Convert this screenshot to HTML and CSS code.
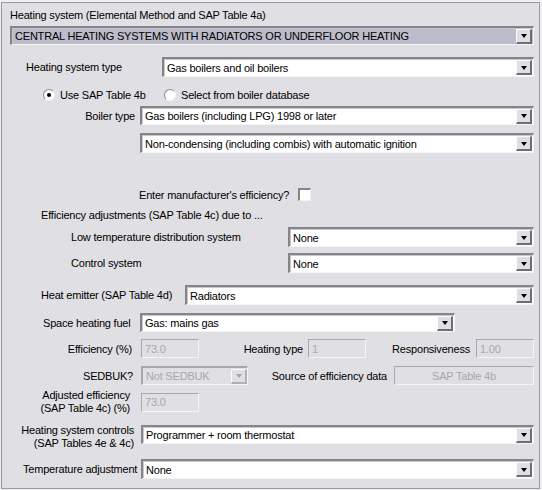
FILE: index.html
```html
<!DOCTYPE html>
<html>
<head>
<meta charset="utf-8">
<link rel="stylesheet" href="styles.css">
</head>
<body>
<div class="frame">
  <div class="row r-title"><span class="lbl">Heating system (Elemental Method and SAP Table 4a)</span></div>

  <div class="row r-main">
    <div class="combo combo-sel w-main"><span class="val">CENTRAL HEATING SYSTEMS WITH RADIATORS OR UNDERFLOOR HEATING</span><span class="btn"><i class="tri"></i></span></div>
  </div>

  <div class="row r-type">
    <span class="lbl w-type">Heating system type</span>
    <div class="combo grow"><span class="val">Gas boilers and oil boilers</span><span class="btn"><i class="tri"></i></span></div>
  </div>

  <div class="row r-radio">
    <span class="radio on"></span><span class="lbl rl1">Use SAP Table 4b</span>
    <span class="radio"></span><span class="lbl">Select from boiler database</span>
  </div>

  <div class="row r-boiler">
    <span class="lbl rlab w-boiler">Boiler type</span>
    <div class="combo grow"><span class="val">Gas boilers (including LPG) 1998 or later</span><span class="btn"><i class="tri"></i></span></div>
  </div>

  <div class="row r-boiler2">
    <div class="combo grow"><span class="val">Non-condensing (including combis) with automatic ignition</span><span class="btn"><i class="tri"></i></span></div>
  </div>

  <div class="row r-check">
    <span class="lbl w-checklbl">Enter manufacturer's efficiency?</span><span class="check"></span>
  </div>

  <div class="row r-adj"><span class="lbl">Efficiency adjustments (SAP Table 4c) due to ...</span></div>

  <div class="row r-low">
    <span class="lbl w-low">Low temperature distribution system</span>
    <div class="combo grow"><span class="val">None</span><span class="btn"><i class="tri"></i></span></div>
  </div>

  <div class="row r-ctrl">
    <span class="lbl w-low">Control system</span>
    <div class="combo grow"><span class="val">None</span><span class="btn"><i class="tri"></i></span></div>
  </div>

  <div class="row r-emit">
    <span class="lbl w-emit">Heat emitter (SAP Table 4d)</span>
    <div class="combo grow"><span class="val">Radiators</span><span class="btn"><i class="tri"></i></span></div>
  </div>

  <div class="row r-fuel">
    <span class="lbl w-fuel">Space heating fuel</span>
    <div class="combo w-fuelcombo"><span class="val">Gas: mains gas</span><span class="btn"><i class="tri"></i></span></div>
  </div>

  <div class="row r-eff">
    <span class="lbl rlab w-eff">Efficiency (%)</span>
    <span class="field dis w-num">73.0</span>
    <span class="lbl rlab w-htype">Heating type</span>
    <span class="field dis w-num">1</span>
    <span class="lbl rlab w-resp">Responsiveness</span>
    <span class="field dis grow">1.00</span>
  </div>

  <div class="row r-sed">
    <span class="lbl rlab w-sed">SEDBUK?</span>
    <div class="combo dis w-sedcombo"><span class="val">Not SEDBUK</span><span class="btn"><i class="tri"></i></span></div>
    <span class="lbl rlab w-src">Source of efficiency data</span>
    <span class="field dis grow center">SAP Table 4b</span>
  </div>

  <div class="row r-adjeff">
    <span class="lbl rlab w-adj two">Adjusted efficiency<br>(SAP Table 4c) (%)</span>
    <span class="field dis w-num">73.0</span>
  </div>

  <div class="row r-controls">
    <span class="lbl rlab w-controls two">Heating system controls<br>(SAP Tables 4e &amp; 4c)</span>
    <div class="combo grow top"><span class="val">Programmer + room thermostat</span><span class="btn"><i class="tri"></i></span></div>
  </div>

  <div class="row r-temp">
    <span class="lbl w-temp">Temperature adjustment</span>
    <div class="combo grow"><span class="val">None</span><span class="btn"><i class="tri"></i></span></div>
  </div>
</div>
</body>
</html>
```

FILE: styles.css
```css
html, body {
  margin: 0;
  padding: 0;
  background: #efeff1;
}
body {
  font-family: "Liberation Sans", Arial, sans-serif;
  font-size: 11px;
  letter-spacing: -0.2px;
  color: #000;
}
.frame {
  box-sizing: border-box;
  margin: 2px 0 0 1px;
  width: 539px;
  height: 487px;
  border: 1px solid #9a9a9e;
  background: #e0dfe3;
  padding: 0 5px 0 0;
}
.row {
  display: flex;
  align-items: center;
}
.lbl {
  white-space: nowrap;
  line-height: 14px;
}
.rlab { text-align: right; box-sizing: border-box; flex: none; }
.two { white-space: normal; line-height: 13px; }
.grow { flex: 1; }

/* combo box */
.combo {
  box-sizing: border-box;
  height: 19px;
  display: flex;
  align-items: center;
  background: #fff;
  border-style: solid;
  border-width: 2px 1px 1px 2px;
  border-color: #858589 #f4f4f6 #f4f4f6 #858589;
  box-shadow: inset 1px 1px 0 #c8c8cc;
  padding: 0 1px 0 3px;
}
.combo .val {
  flex: 1;
  white-space: nowrap;
  overflow: hidden;
}
.combo .btn {
  box-sizing: border-box;
  flex: none;
  width: 16px;
  height: 15px;
  background: #e0dfe3;
  border-style: solid;
  border-width: 1px 2px 2px 1px;
  border-color: #fcfcfc #6e6e72 #6e6e72 #fcfcfc;
  display: flex;
  align-items: center;
  justify-content: center;
}
.tri {
  display: block;
  width: 0;
  height: 0;
  border-left: 3.5px solid transparent;
  border-right: 3.5px solid transparent;
  border-top: 4px solid #000;
  margin-top: 1px;
}
.combo-sel { background: #bcbcca; }
.combo.dis { background: #e0dfe3; color: #a8a8ac; border-color: #a8a8ac #f4f4f6 #f4f4f6 #a8a8ac; box-shadow: none; }
.combo.dis .btn { border-color: #fcfcfc #b0b0b4 #b0b0b4 #fcfcfc; }
.combo.dis .tri { border-top-color: #a8a8ac; }
.top { align-self: flex-start; margin-top: 3px; }

/* disabled text field */
.field {
  box-sizing: border-box;
  flex: none;
  height: 19px;
  display: flex;
  align-items: center;
  padding: 0 3px;
  border-style: solid;
  border-width: 1px;
  border-color: #a8a8ac #f4f4f6 #f4f4f6 #a8a8ac;
  color: #a8a8ac;
  background: #e0dfe3;
}
.field.grow { flex: 1; }
.center { justify-content: center; }

/* radios & checkbox */
.radio {
  box-sizing: border-box;
  flex: none;
  width: 12px;
  height: 12px;
  border-radius: 50%;
  background: #fff;
  border: 1px solid;
  border-color: #8a8a8e #f4f4f6 #f4f4f6 #8a8a8e;
  display: flex;
  align-items: center;
  justify-content: center;
  margin-right: 5px;
}
.radio.on::after {
  content: "";
  width: 4px;
  height: 4px;
  border-radius: 50%;
  background: #000;
}
.check {
  box-sizing: border-box;
  flex: none;
  width: 13px;
  height: 13px;
  background: #fff;
  border-style: solid;
  border-width: 2px 1px 1px 2px;
  border-color: #858589 #f4f4f6 #f4f4f6 #858589;
}

/* rows */
.r-title { margin-top: 5px; height: 14px; padding-left: 8px; }
.r-main { margin-top: 4px; padding-left: 8px; }
.w-main { flex: 1; }
.r-type { margin-top: 12px; height: 20px; padding-left: 24px; }
.r-type .combo { height: 20px; }
.w-type { width: 136px; }
.r-radio { margin-top: 10px; height: 15px; padding-left: 41px; }
.rl1 { width: 104px; flex: none; }
.r-boiler { margin-top: 4px; height: 19px; }
.w-boiler { width: 138px; padding-right: 5px; }
.r-boiler2 { margin-top: 8px; height: 20px; padding-left: 138px; }
.r-boiler2 .combo { height: 20px; }
.r-check { margin-top: 35px; height: 13px; padding-left: 137px; }
.w-checklbl { width: 159px; flex: none; }
.r-adj { margin-top: 7px; height: 14px; padding-left: 39px; }
.r-low { margin-top: 5px; height: 20px; padding-left: 69px; }
.r-ctrl { margin-top: 6px; height: 20px; padding-left: 69px; }
.r-low .combo, .r-ctrl .combo, .r-emit .combo, .r-temp .combo { height: 20px; }
.w-low { width: 217px; flex: none; }
.r-emit { margin-top: 12px; height: 20px; padding-left: 39px; }
.w-emit { width: 144px; flex: none; }
.r-fuel { margin-top: 8px; height: 19px; padding-left: 41px; }
.w-fuel { width: 97px; flex: none; }
.w-fuelcombo { width: 315px; }
.r-eff { margin-top: 7px; height: 19px; }
.w-eff { width: 139px; padding-right: 9px; }
.w-num { width: 58px; }
.w-htype { width: 109px; padding-right: 5px; }
.w-resp { width: 110px; padding-right: 6px; }
.r-sed { margin-top: 8px; height: 19px; }
.w-sed { width: 139px; padding-right: 8px; }
.w-sedcombo { width: 107px; padding-right: 0; flex: none; }
.w-src { width: 146px; padding-right: 7px; }
.r-adjeff { margin-top: 3px; height: 28px; }
.w-adj { width: 139px; padding-right: 11px; }
.r-controls { margin-top: 6px; height: 30px; }
.w-controls { width: 139px; padding-right: 7px; }
.r-temp { margin-top: 7px; height: 20px; padding-left: 21px; }
.w-temp { width: 118px; flex: none; }
```
